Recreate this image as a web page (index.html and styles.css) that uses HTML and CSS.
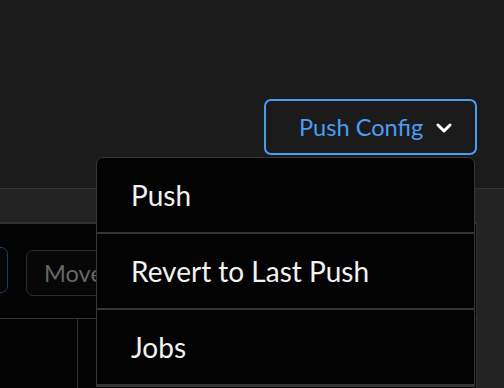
FILE: index.html
```html
<!DOCTYPE html>
<html>
<head>
<meta charset="utf-8">
<link rel="stylesheet" href="styles.css">
</head>
<body>
<header class="header">
  <div class="push">
    <button class="push-btn">
      <span>Push Config</span>
      <svg class="chev" width="16" height="10" viewBox="0 0 16 10"><path d="M2 2 L8 8 L14 2" fill="none" stroke="#ffffff" stroke-width="3" stroke-linecap="round" stroke-linejoin="round"/></svg>
    </button>
    <ul class="menu">
      <li class="menu-item">Push</li>
      <li class="menu-item">Revert to Last Push</li>
      <li class="menu-item">Jobs</li>
    </ul>
  </div>
</header>
<section class="section">
  <div class="content">
    <div class="toolbar">
      <button class="tb-btn tb-primary" aria-label="Add"></button>
      <button class="tb-btn">Move...</button>
    </div>
    <div class="table">
      <div class="col col-first"></div>
      <div class="col"></div>
    </div>
  </div>
</section>
</body>
</html>
```

FILE: styles.css
```css
html, body {
  margin: 0;
  padding: 0;
  height: 100%;
  overflow: hidden;
}
body {
  background: #1b1b1b;
  font-family: Lato, "Open Sans", sans-serif;
  display: flex;
  flex-direction: column;
}
.header {
  border-bottom: 1px solid #333333;
  display: flex;
  justify-content: flex-end;
  align-items: flex-start;
  padding: 99px 27px 0 0;
  box-sizing: border-box;
  height: 189px;
  flex: 0 0 189px;
  position: relative;
  z-index: 2;
}
.push {
  position: relative;
}
.push-btn {
  width: 213px;
  height: 56px;
  box-sizing: border-box;
  border: 2px solid #4b9cf5;
  border-radius: 7px;
  background: #1b1b1b;
  color: #4b9cf5;
  font-family: Lato, sans-serif;
  font-size: 23.6px;
  display: flex;
  align-items: center;
  justify-content: flex-start;
  gap: 13px;
  padding: 0 0 0 33px;
}
.chev {
  margin-top: 2px;
}
.menu {
  position: absolute;
  top: calc(100% + 2px);
  right: 2px;
  width: 379px;
  box-sizing: border-box;
  margin: 0;
  padding: 0;
  list-style: none;
  background: #030303;
  border: 1px solid #363636;
  border-radius: 7px 7px 0 0;
}
.menu-item {
  height: 76px;
  border-bottom: 2px solid #363636;
  box-sizing: border-box;
  display: flex;
  align-items: center;
  padding-left: 34px;
  color: #f2f2f2;
  font-size: 28px;
}
.section {
  flex: 1;
  background: #232323;
  padding-top: 33px;
  display: flex;
}
.content {
  width: 477px;
  box-sizing: border-box;
  background: #030303;
  border-top: 2px solid #333333;
  border-right: 1px solid #333333;
  display: flex;
  flex-direction: column;
}
.toolbar {
  display: flex;
  align-items: flex-start;
  gap: 18px;
  padding: 26px 0 0 0;
  height: 95px;
  flex: 0 0 95px;
  box-sizing: border-box;
  border-bottom: 1px solid #333333;
  margin-left: -100px;
}
.tb-btn {
  height: 46px;
  box-sizing: border-box;
  border: 1px solid #2a2a2a;
  border-radius: 7px;
  background: #070707;
  color: #666666;
  font-family: Lato, sans-serif;
  font-size: 23.6px;
  padding: 0 17px;
}
.tb-primary {
  width: 108px;
  border: 1px solid #1d3b66;
  margin-top: -3px;
}
.table {
  flex: 1;
  display: flex;
}
.col {
  flex: 1;
}
.col-first {
  flex: 0 0 77px;
  border-right: 1px solid #333333;
}
```
